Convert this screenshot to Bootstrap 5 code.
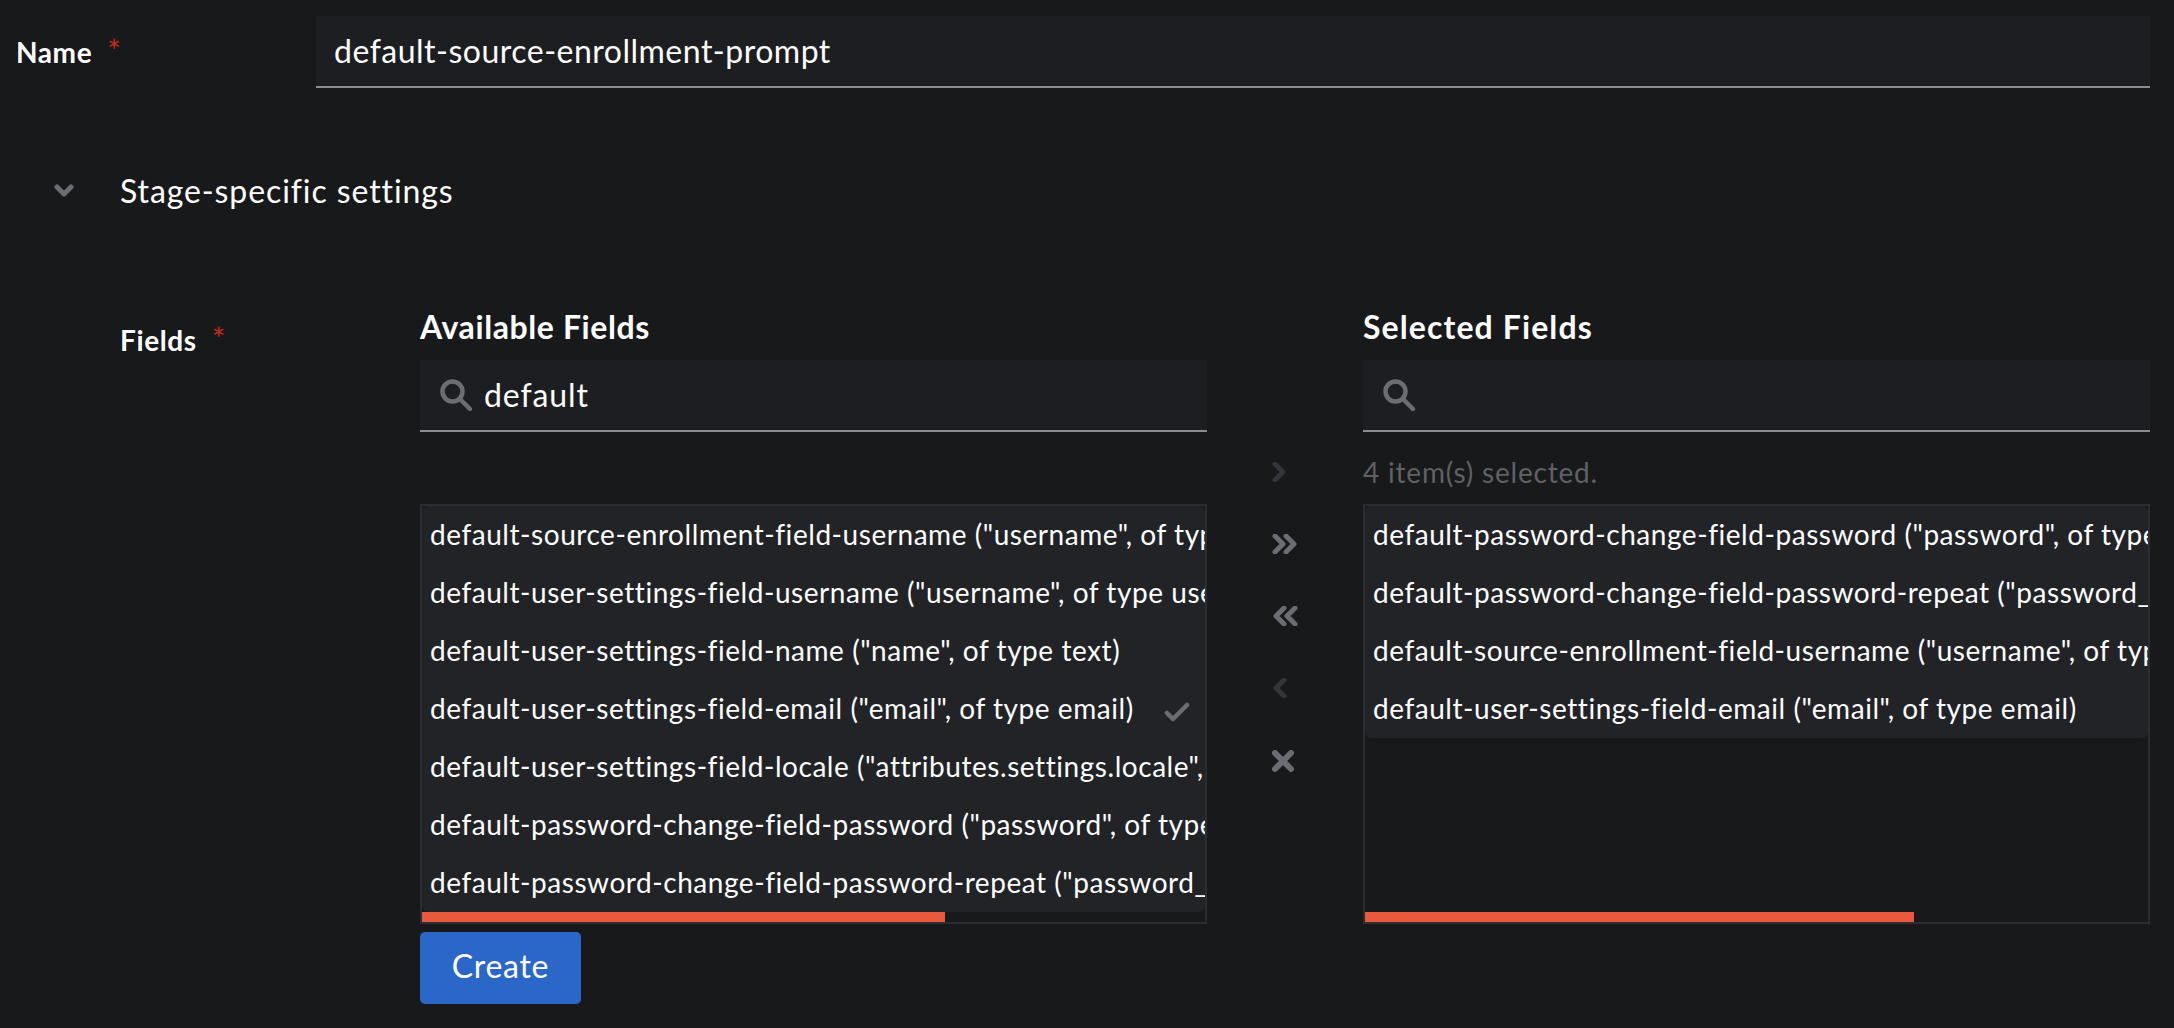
<!DOCTYPE html>
<html lang="en">
<head>
  <meta charset="UTF-8" />
  <title>Prompt stage</title>
  <link href="https://cdn.jsdelivr.net/npm/bootstrap@5.3.0/dist/css/bootstrap.min.css" rel="stylesheet">
  <style>
    body {
      background: #18191b;
      color: #fff;
      font-family: Lato, "Open Sans", "Liberation Sans", sans-serif;
      font-size: 32px;
      overflow: hidden;
    }

    .stage-form { padding: 16px 24px 0 16px; }

    .field-label {
      font-size: 28px;
      font-weight: 700;
      letter-spacing: .6px;
    }

    .req-mark {
      color: #c22c1d;
      font-size: 32px;
      font-weight: 400;
      line-height: 1;
      margin-left: 15px;
    }

    .name-label { width: 300px; height: 72px; line-height: 72px; }

    .dark-input {
      height: 72px;
      background: #1d1e22;
      border-bottom: 2px solid #8a8d90;
    }

    .name-value { padding: 0 18px; line-height: 70px; letter-spacing: .5px; }

    .stage-toggle { margin-top: 83px; height: 40px; letter-spacing: .9px; }
    .toggle-icon { width: 104px; padding-left: 38px; }

    .fields-row { margin-top: 96px; padding-left: 104px; }
    .fields-label { width: 300px; padding-top: 12px; }

    .pane { width: 787px; flex: none; }
    .pane-title { font-weight: 700; height: 53px; line-height: 40px; letter-spacing: .6px; }
    .pane-title-wide { letter-spacing: 1.1px; }

    .search-box { gap: 12px; padding: 0 14px 0 20px; letter-spacing: .9px; }
    .pane-status { height: 72px; line-height: 80px; color: #5f6165; font-size: 28px; letter-spacing: .8px; }

    .pick-list {
      height: 420px;
      border: 2px solid #2b2d32;
      background: #18191b;
    }

    .pick-rows { height: 406px; }

    .pick-item {
      background: #212327;
      color: #fff;
      border: 0;
      border-radius: 0;
      font-size: 28px;
      height: 58px;
      line-height: 56px;
      letter-spacing: .55px;
      padding: 0 8px;
      white-space: nowrap;
    }

    .pick-check { margin-left: 30px; }
    .pick-scroll { height: 10px; background: #e9593c; }

    .arrow-col {
      width: 156px;
      flex: none;
      padding: 155px 0 0 65px;
      gap: 52px;
    }

    .create-btn {
      margin: 8px 0 0 404px;
      width: 161px;
      height: 72px;
      background: #2b66c9;
      border: 0;
      border-radius: 5px;
      color: #fff;
      font-size: 32px;
      letter-spacing: .7px;
      padding-bottom: 10px;
    }
  </style>
</head>
<body>
  <div class="stage-form">
    <div class="d-flex">
      <div class="field-label name-label">Name<span class="req-mark">*</span></div>
      <div class="dark-input name-value flex-fill">default-source-enrollment-prompt</div>
    </div>

    <div class="stage-toggle d-flex align-items-center">
      <div class="toggle-icon d-flex">
        <svg width="20" height="14" viewBox="0 0 20 14"><path d="M3 3l7 7 7-7" fill="none" stroke="#6a6e73" stroke-width="5" stroke-linecap="round" stroke-linejoin="round"/></svg>
      </div>
      <div>Stage-specific settings</div>
    </div>

    <div class="fields-row d-flex">
      <div class="field-label fields-label">Fields<span class="req-mark">*</span></div>

      <div class="pane">
        <div class="pane-title">Available Fields</div>
        <div class="dark-input search-box d-flex align-items-center">
          <svg width="32" height="32" viewBox="0 0 32 32"><circle cx="12.5" cy="12.5" r="10" fill="none" stroke="#6a6e73" stroke-width="4.5"/><path d="M20 20l10 10" stroke="#6a6e73" stroke-width="4.5" stroke-linecap="round"/></svg>
          <span>default</span>
        </div>
        <div class="pane-status"></div>
        <div class="pick-list overflow-hidden">
          <ul class="pick-rows list-group overflow-hidden m-0">
            <li class="list-group-item pick-item">default-source-enrollment-field-username ("username", of type username)</li>
            <li class="list-group-item pick-item">default-user-settings-field-username ("username", of type username)</li>
            <li class="list-group-item pick-item">default-user-settings-field-name ("name", of type text)</li>
            <li class="list-group-item pick-item">default-user-settings-field-email ("email", of type email)<svg class="pick-check" width="26" height="20" viewBox="0 0 26 20"><path d="M3 11l6 6L23 3" fill="none" stroke="#6a6e73" stroke-width="4.5" stroke-linecap="round" stroke-linejoin="round"/></svg></li>
            <li class="list-group-item pick-item">default-user-settings-field-locale ("attributes.settings.locale", of type ak-locale)</li>
            <li class="list-group-item pick-item">default-password-change-field-password ("password", of type password)</li>
            <li class="list-group-item pick-item">default-password-change-field-password-repeat ("password_repeat", of type password)</li>
          </ul>
          <div class="pick-scroll" style="width: 523px"></div>
        </div>
      </div>

      <div class="arrow-col d-flex flex-column">
        <svg width="16" height="20" viewBox="0 0 16 20"><path d="M3 2l8 8-8 8" fill="none" stroke="#33353a" stroke-width="5" stroke-linecap="round" stroke-linejoin="round"/></svg>
        <svg width="26" height="20" viewBox="0 0 26 20"><path d="M3 2l8 8-8 8M14 2l8 8-8 8" fill="none" stroke="#6a6e73" stroke-width="5" stroke-linecap="round" stroke-linejoin="round"/></svg>
        <svg width="26" height="20" viewBox="0 0 26 20"><path d="M12 2l-8 8 8 8M23 2l-8 8 8 8" fill="none" stroke="#6a6e73" stroke-width="5" stroke-linecap="round" stroke-linejoin="round"/></svg>
        <svg width="16" height="20" viewBox="0 0 16 20"><path d="M12 2l-8 8 8 8" fill="none" stroke="#33353a" stroke-width="5" stroke-linecap="round" stroke-linejoin="round"/></svg>
        <svg width="24" height="24" viewBox="0 0 24 24"><path d="M3 3l16 16M19 3L3 19" fill="none" stroke="#6a6e73" stroke-width="6" stroke-linecap="round"/></svg>
      </div>

      <div class="pane">
        <div class="pane-title pane-title-wide">Selected Fields</div>
        <div class="dark-input search-box d-flex align-items-center">
          <svg width="32" height="32" viewBox="0 0 32 32"><circle cx="12.5" cy="12.5" r="10" fill="none" stroke="#6a6e73" stroke-width="4.5"/><path d="M20 20l10 10" stroke="#6a6e73" stroke-width="4.5" stroke-linecap="round"/></svg>
        </div>
        <div class="pane-status">4 item(s) selected.</div>
        <div class="pick-list overflow-hidden">
          <ul class="pick-rows list-group overflow-hidden m-0">
            <li class="list-group-item pick-item">default-password-change-field-password ("password", of type password)</li>
            <li class="list-group-item pick-item">default-password-change-field-password-repeat ("password_repeat", of type password)</li>
            <li class="list-group-item pick-item">default-source-enrollment-field-username ("username", of type username)</li>
            <li class="list-group-item pick-item">default-user-settings-field-email ("email", of type email)</li>
          </ul>
          <div class="pick-scroll" style="width: 549px"></div>
        </div>
      </div>
    </div>

    <button type="button" class="btn create-btn">Create</button>
  </div>
</body>
</html>
